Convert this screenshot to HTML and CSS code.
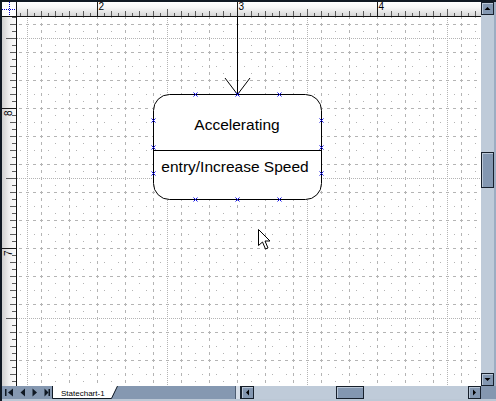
FILE: index.html
```html
<!DOCTYPE html>
<html>
<head>
<meta charset="utf-8">
<title>Statechart</title>
<link rel="stylesheet" href="styles.css">
</head>
<body>
<div class="window">
  <div class="corner">
    <svg class="blk" width="14" height="14" viewBox="2 2 14 14">
      <path class="cross" d="M2 9.5H16 M9.5 2V16"/>
    </svg>
  </div>

  <div class="ruler-top">
    <svg class="blk" width="464" height="14" viewBox="17 2 464 14">
      <defs>
        <pattern id="tticks" patternUnits="userSpaceOnUse" x="97" y="2" width="140" height="14">
          <path class="tick-major" d="M0.5 0V14"/>
          <path class="tick" d="M7.5 11V14 M14.5 9V14 M21.5 11V14 M28.5 9V14 M35.5 11V14 M42.5 9V14 M49.5 11V14 M56.5 9V14 M63.5 11V14 M70.5 7V14 M77.5 11V14 M84.5 9V14 M91.5 11V14 M98.5 9V14 M105.5 11V14 M112.5 9V14 M119.5 11V14 M126.5 9V14 M133.5 11V14"/>
        </pattern>
      </defs>
      <rect x="17" y="2" width="464" height="14" fill="url(#tticks)"/>
      <text class="ruler-label" x="98.5" y="10">2</text>
      <text class="ruler-label" x="238.5" y="10">3</text>
      <text class="ruler-label" x="378.5" y="10">4</text>
    </svg>
  </div>

  <div class="vscroll">
    <div class="sb-btn">
      <svg class="blk" width="11" height="11" viewBox="0 0 11 11"><polygon class="sb-arrow" points="2.5,7 8.5,7 5.5,4"/></svg>
    </div>
    <div class="sb-track sb-track-v"><div class="sb-thumb sb-thumb-v"></div></div>
    <div class="sb-btn">
      <svg class="blk" width="11" height="11" viewBox="0 0 11 11"><polygon class="sb-arrow" points="2.5,4 8.5,4 5.5,7"/></svg>
    </div>
  </div>

  <div class="ruler-left">
    <svg class="blk" width="14" height="369" viewBox="2 17 14 369">
      <defs>
        <pattern id="lticks" patternUnits="userSpaceOnUse" x="2" y="108" width="14" height="140">
          <path class="tick-major" d="M0 0.5H14"/>
          <path class="tick" d="M10 7.5H14 M8 14.5H14 M10 21.5H14 M8 28.5H14 M10 35.5H14 M8 42.5H14 M10 49.5H14 M8 56.5H14 M10 63.5H14 M4 70.5H14 M10 77.5H14 M8 84.5H14 M10 91.5H14 M8 98.5H14 M10 105.5H14 M8 112.5H14 M10 119.5H14 M8 126.5H14 M10 133.5H14"/>
        </pattern>
      </defs>
      <rect x="2" y="17" width="14" height="369" fill="url(#lticks)"/>
      <text class="ruler-label" transform="translate(12 116) rotate(-90)">8</text>
      <text class="ruler-label" transform="translate(12 256) rotate(-90)">7</text>
    </svg>
  </div>

  <div class="canvas">
    <svg class="blk" width="464" height="369" viewBox="17 17 464 369">
      <defs>
        <pattern id="grid" patternUnits="userSpaceOnUse" x="27" y="38" width="140" height="140">
          <path class="g-fine" d="M0.5 0V140 M0 0.5H140"/>
          <path class="g-dash" d="M14.5 0V140 M42.5 0V140 M70.5 0V140 M98.5 0V140 M126.5 0V140 M0 14.5H140 M0 42.5H140 M0 70.5H140 M0 98.5H140 M0 126.5H140"/>
          <path class="g-sparse" d="M28.5 0V140 M56.5 0V140 M84.5 0V140 M112.5 0V140 M0 28.5H140 M0 56.5H140 M0 84.5H140 M0 112.5H140"/>
        </pattern>
        <path id="cp" class="mark" d="M-2 -2L2 2M-2 2L2 -2"/>
      </defs>
      <rect x="17" y="17" width="464" height="369" fill="#fff"/>
      <rect x="17" y="17" width="464" height="369" fill="url(#grid)"/>

      <line class="conn" x1="237.5" y1="17" x2="237.5" y2="94.5"/>
      <polyline class="conn" points="225,78 237.5,94.5 250,78"/>

      <rect class="state" x="153.5" y="94.5" width="168" height="105" rx="16" ry="16"/>
      <line class="conn" x1="153.5" y1="150.5" x2="321.5" y2="150.5"/>
      <text class="shape-text" x="237" y="130" text-anchor="middle">Accelerating</text>
      <text class="shape-text" x="235" y="172" text-anchor="middle">entry/Increase Speed</text>

      <use href="#cp" x="195.5" y="94.5"/>
      <use href="#cp" x="237.5" y="94.5"/>
      <use href="#cp" x="279.5" y="94.5"/>
      <use href="#cp" x="195.5" y="199.5"/>
      <use href="#cp" x="237.5" y="199.5"/>
      <use href="#cp" x="279.5" y="199.5"/>
      <use href="#cp" x="153.5" y="120.5"/>
      <use href="#cp" x="153.5" y="147.5"/>
      <use href="#cp" x="153.5" y="173.5"/>
      <use href="#cp" x="321.5" y="120.5"/>
      <use href="#cp" x="321.5" y="147.5"/>
      <use href="#cp" x="321.5" y="173.5"/>

      <polygon class="cursor" transform="translate(258.5 229.5)" points="0,0 0,16 4,12.5 7,19.5 9.5,18.5 6.5,11.5 11.5,11.5"/>
    </svg>
  </div>

  <div class="bottombar">
    <svg class="blk nav" width="50" height="13" viewBox="0 0 50 13">
      <rect class="nav-glyph" x="3" y="3" width="1.5" height="7"/>
      <polygon class="nav-glyph" points="11,2.5 11,10.5 6,6.5"/>
      <polygon class="nav-glyph" points="23,2.5 23,10.5 18.5,6.5"/>
      <polygon class="nav-glyph" points="30.5,2.5 30.5,10.5 35,6.5"/>
      <polygon class="nav-glyph" points="42.5,2.5 42.5,10.5 46.5,6.5"/>
      <rect class="nav-glyph" x="46.5" y="3" width="1.5" height="7"/>
    </svg>
    <svg class="blk tab" width="67" height="13" viewBox="0 0 67 13">
      <polygon class="tab-face" points="1,0 65.5,0 59.5,12 1,12"/>
      <path class="tab-edge" d="M0.5 0V12.5H59.5L65.5 0"/>
      <text class="tab-label" x="9" y="10">Statechart-1</text>
    </svg>
    <div class="tab-fill"></div>
    <div class="split"></div>
    <div class="hscroll">
      <div class="sb-btn">
        <svg class="blk" width="11" height="11" viewBox="0 0 11 11"><polygon class="sb-arrow" points="7,2.5 7,8.5 4,5.5"/></svg>
      </div>
      <div class="sb-track sb-track-h"><div class="sb-thumb sb-thumb-h"></div></div>
      <div class="sb-btn">
        <svg class="blk" width="11" height="11" viewBox="0 0 11 11"><polygon class="sb-arrow" points="4,2.5 4,8.5 7,5.5"/></svg>
      </div>
    </div>
    <div class="sizebox"></div>
  </div>
</div>
</body>
</html>
```

FILE: styles.css
```css
html, body {
  margin: 0;
  padding: 0;
  background: #ffffff;
}

body {
  font-family: "Liberation Sans", Arial, sans-serif;
}

.blk {
  display: block;
}

.window {
  width: 496px;
  height: 401px;
  box-sizing: border-box;
  border-top: 2px solid #101923;
  border-left: 2px solid #101923;
  display: grid;
  grid-template-columns: 15px 464px 15px;
  grid-template-rows: 15px 369px 15px;
  background: #ffffff;
  overflow: hidden;
}

/* ---------- rulers ---------- */
.corner {
  grid-column: 1;
  grid-row: 1;
  box-sizing: border-box;
  border-right: 1px solid #111;
  border-bottom: 1px solid #111;
  background: #ffffff;
}

.cross {
  fill: none;
  stroke: #0000c8;
  stroke-width: 1;
  stroke-dasharray: 1 1;
  shape-rendering: crispEdges;
}

.ruler-top {
  grid-column: 2;
  grid-row: 1;
  box-sizing: border-box;
  border-bottom: 1px solid #111;
  background: linear-gradient(to bottom, #ffffff 0%, #f7f7f7 40%, #d6d6d6 100%);
}

.ruler-left {
  grid-column: 1;
  grid-row: 2;
  box-sizing: border-box;
  border-right: 1px solid #111;
  background: linear-gradient(to right, #cfcfcf 0%, #efefef 50%, #fbfbfb 100%);
}

.tick {
  fill: none;
  stroke: #5c5c5c;
  stroke-width: 1;
  shape-rendering: crispEdges;
}

.tick-major {
  fill: none;
  stroke: #1a1a1a;
  stroke-width: 1;
  shape-rendering: crispEdges;
}

.ruler-label {
  font-family: "Liberation Sans", Arial, sans-serif;
  font-size: 10px;
  fill: #000;
}

/* ---------- drawing canvas ---------- */
.canvas {
  grid-column: 2;
  grid-row: 2;
  position: relative;
  background: #ffffff;
}

.g-fine,
.g-dash,
.g-sparse {
  fill: none;
  stroke: #b4b4b4;
  stroke-width: 1;
  shape-rendering: crispEdges;
}

.g-fine {
  stroke-dasharray: 1 1;
}

.g-dash {
  stroke-dasharray: 3 4;
  stroke-dashoffset: 1;
}

.g-sparse {
  stroke-dasharray: 1 13;
  stroke-dashoffset: -7;
}

.conn {
  fill: none;
  stroke: #000;
  stroke-width: 1;
}

.state {
  fill: #ffffff;
  stroke: #000;
  stroke-width: 1;
}

.shape-text {
  font-family: "Liberation Sans", Arial, sans-serif;
  font-size: 15.5px;
  fill: #000;
}

.mark {
  fill: none;
  stroke: #1010e8;
  stroke-width: 1;
}

.cursor {
  fill: #ffffff;
  stroke: #000;
  stroke-width: 1;
  stroke-linejoin: miter;
}

/* ---------- scrollbars ---------- */
.vscroll {
  grid-column: 3;
  grid-row: 1 / 3;
  box-sizing: border-box;
  border-right: 2px solid #9cadc2;
  display: flex;
  flex-direction: column;
  background: #bfcbd9;
}

.sb-btn {
  flex: none;
  width: 13px;
  height: 13px;
  box-sizing: border-box;
  border: 1px solid #17202c;
  background: #8397b1;
  box-shadow: inset 1px 1px 0 #b9c6d6;
}

.sb-arrow {
  fill: #000;
}

.sb-track {
  flex: 1;
  display: flex;
  background: #bfcbd9;
}

.sb-track-v {
  flex-direction: column;
}

.sb-thumb {
  flex: none;
  box-sizing: border-box;
  border: 1px solid #17202c;
  background: #8397b1;
  box-shadow: inset 1px 1px 0 #b9c6d6;
}

.sb-thumb-v {
  width: 13px;
  height: 36px;
  margin-top: 137px;
}

.sb-thumb-h {
  width: 28px;
  height: 13px;
  margin-left: 82px;
}

/* ---------- bottom bar ---------- */
.bottombar {
  grid-column: 1 / 4;
  grid-row: 3;
  display: flex;
  box-sizing: border-box;
  height: 15px;
  border-bottom: 2px solid #bcc8d6;
  background: #8598b1;
}

.nav {
  flex: none;
}

.nav-glyph {
  fill: #0f1823;
}

.tab {
  flex: none;
}

.tab-face {
  fill: #ffffff;
}

.tab-edge {
  fill: none;
  stroke: #111a25;
  stroke-width: 1;
}

.tab-label {
  font-family: "Liberation Sans", Arial, sans-serif;
  font-size: 8px;
  fill: #000;
}

.tab-fill {
  flex: 1;
}

.split {
  flex: none;
  width: 6px;
  height: 13px;
  box-sizing: border-box;
  border-left: 1px solid #4d5d72;
  border-right: 1px solid #17202c;
  background: #d6dee8;
}

.hscroll {
  flex: none;
  width: 240px;
  height: 13px;
  display: flex;
}

.sizebox {
  flex: none;
  width: 15px;
  height: 13px;
  background: #8497b0;
}
```
